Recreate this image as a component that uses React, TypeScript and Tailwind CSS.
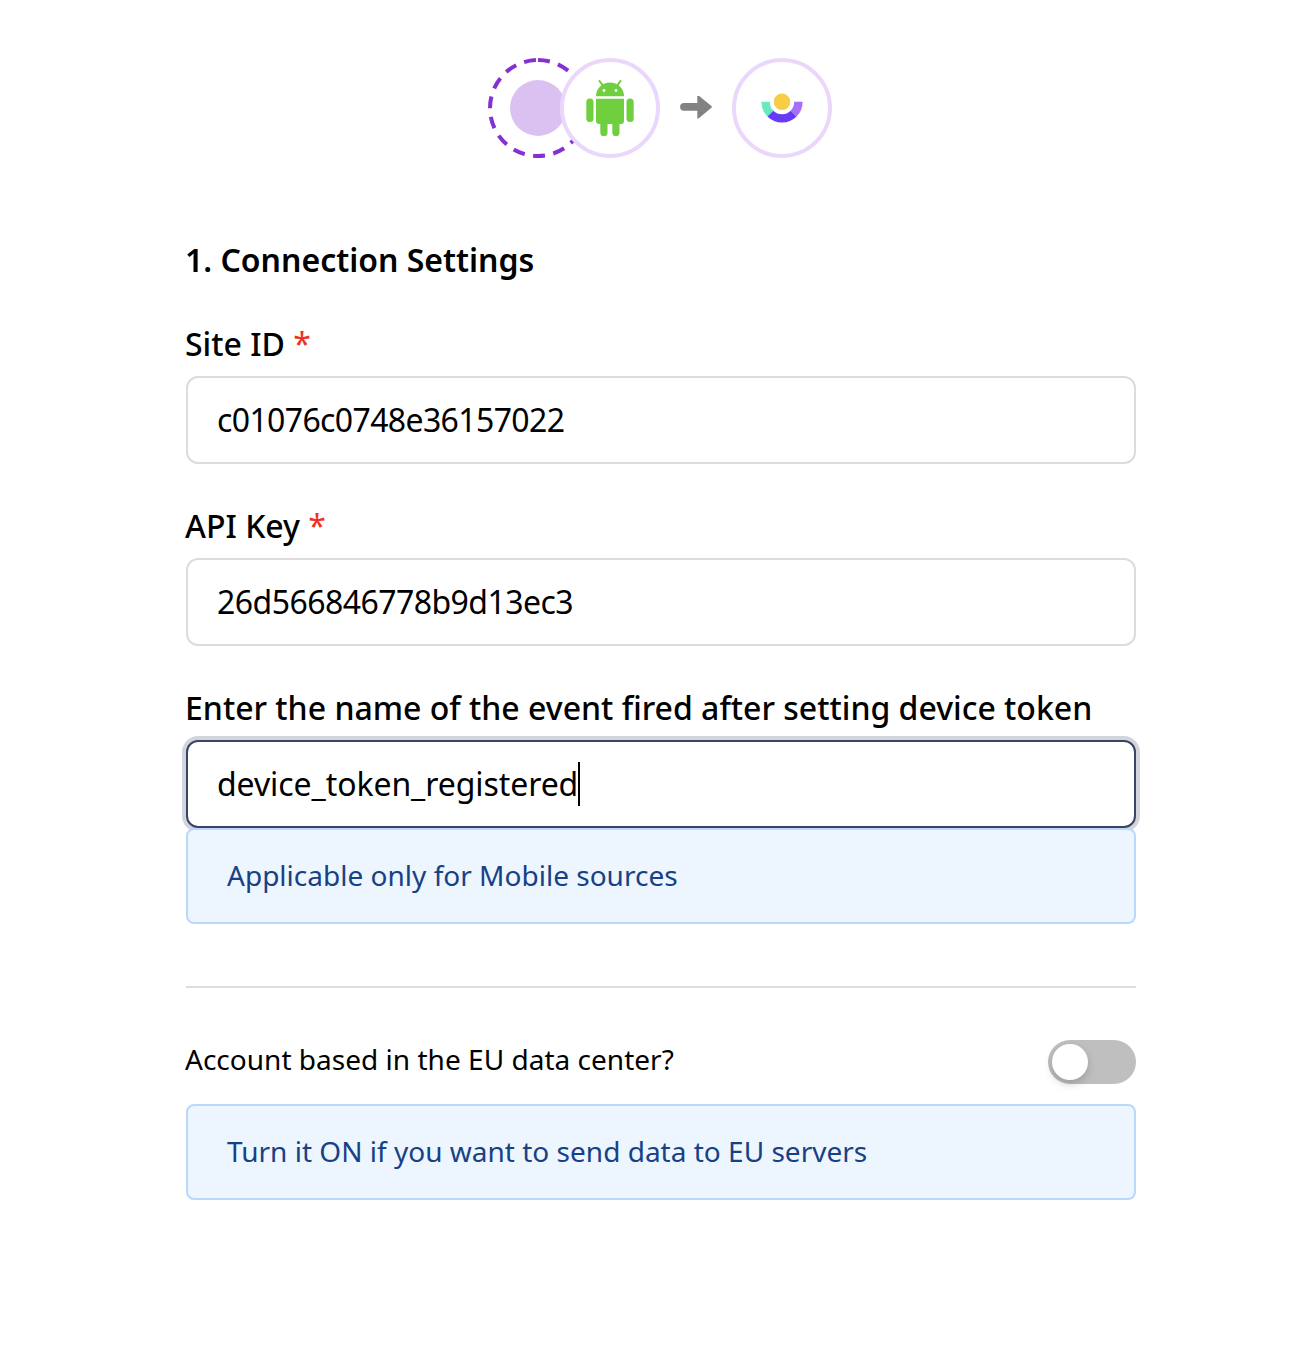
import type { ReactNode } from "react";

function AndroidIcon() {
  return (
    <svg width="48" height="56" viewBox="586 80 48 56" fill="#6fcf3f">
      <path d="M596 96.3a14 13.8 0 0 1 28 0z" />
      <path d="M599.5 81l3 4.2M620.5 81l-3 4.2" stroke="#6fcf3f" strokeWidth="2" strokeLinecap="round" />
      <circle cx="604" cy="90.5" r="1.4" fill="#fff" />
      <circle cx="616" cy="90.5" r="1.4" fill="#fff" />
      <path d="M596 98.8h28v22.2a3 3 0 0 1-3 3h-22a3 3 0 0 1-3-3z" />
      <rect x="586.3" y="98.5" width="7.2" height="23.6" rx="3.6" />
      <rect x="626.5" y="98.5" width="7.2" height="23.6" rx="3.6" />
      <rect x="600.3" y="116" width="7.2" height="20" rx="3.6" />
      <rect x="612.3" y="116" width="7.2" height="20" rx="3.6" />
    </svg>
  );
}

function CustomerLogo() {
  return (
    <svg width="56" height="56" viewBox="-28 -22 56 56" fill="none">
      <path d="M-16.4 -0.2A16.4 16.4 0 0 0 -11.6 11.6" stroke="#6ae8c0" strokeWidth="8.4" />
      <path d="M16.4 -0.2A16.4 16.4 0 0 1 11.6 11.6" stroke="#a66ff5" strokeWidth="8.4" />
      <path d="M-11.6 11.6A16.4 16.4 0 0 0 11.6 11.6" stroke="#673af6" strokeWidth="8.4" />
      <circle cx="0" cy="-0.2" r="8.3" fill="#f8cd46" />
    </svg>
  );
}

function Flow() {
  return (
    <div className="flex h-[100px] items-center pl-[488px]">
      <svg width="100" height="100" viewBox="0 0 100 100" fill="none">
        <circle cx="50" cy="50" r="48" stroke="#8530d3" strokeWidth="4" strokeDasharray="12 8.5" transform="rotate(-90 50 50)" />
        <circle cx="50" cy="50" r="28" fill="#dbc1f1" />
      </svg>
      <div className="relative -ml-7 flex size-[100px] items-center justify-center rounded-full border-4 border-[#ead7fb] bg-white">
        <AndroidIcon />
      </div>
      <svg className="mx-5" width="32" height="24" viewBox="0 0.3 32 24" fill="#828282">
        <path d="M4 7.2H17.3V0.2Q17.6 -0.8 18.8 0L31.4 10.4Q32.3 11.2 31.4 12L18.8 22.5Q17.6 23.2 17.3 22.2V15H4A3.9 3.9 0 0 1 4 7.2z" />
      </svg>
      <div className="flex size-[100px] items-center justify-center rounded-full border-4 border-[#ead7fb]">
        <CustomerLogo />
      </div>
    </div>
  );
}

function Label({ children, required }: { children: ReactNode; required?: boolean }) {
  return (
    <div className="-ml-px h-[44px] text-[32px] leading-[44px] font-medium whitespace-nowrap">
      {children}
      {required && <span className="font-normal text-[#ee3124]"> *</span>}
    </div>
  );
}

function Field({ value, focused, tracking }: { value: string; focused?: boolean; tracking: string }) {
  return (
    <div
      className={
        "mt-[10px] flex h-[88px] items-center rounded-xl border-2 bg-white pl-[29px] text-[32px] leading-[44px] " +
        (focused ? "border-[#3a4564] shadow-[0_0_0_4px_#d2d5dc]" : "border-[#dcdcdc]")
      }
    >
      <span className={tracking}>{value}</span>
      {focused && <span className="h-[44px] w-[2px] bg-black" />}
    </div>
  );
}

function Note({ children }: { children: ReactNode }) {
  return (
    <div className="relative flex h-[96px] items-center rounded-lg border-2 border-[#bbd7fb] bg-[#edf5ff] pb-[2px] pl-[39px] text-[28px] tracking-[0.01px] text-[#174185]">
      {children}
    </div>
  );
}

export default function App() {
  return (
    <div className="h-[1348px] w-[1300px] bg-white pt-[58px] font-['Noto_Sans',sans-serif] text-black">
      <Flow />
      <main className="ml-[186px] w-[950px] pt-[80px]">
        <h1 className="-ml-px h-[44px] text-[32px] leading-[44px] font-semibold">1. Connection Settings</h1>
        <section className="mt-10">
          <Label required>Site ID</Label>
          <Field value="c01076c0748e36157022" tracking="tracking-[-0.63px]" />
        </section>
        <section className="mt-10">
          <Label required>API Key</Label>
          <Field value="26d566846778b9d13ec3" tracking="tracking-[-0.55px]" />
        </section>
        <section className="mt-10">
          <Label>Enter the name of the event fired after setting device token</Label>
          <Field value="device_token_registered" focused tracking="tracking-[-0.08px]" />
          <Note>Applicable only for Mobile sources</Note>
        </section>
        <hr className="mt-[62px] border-t-2 border-[#dedede]" />
        <div className="mt-[52px] flex h-[44px] items-center justify-between">
          <span className="-mt-[6px] -ml-px text-[28px] tracking-[0.02px]">Account based in the EU data center?</span>
          <div className="h-[44px] w-[88px] rounded-full bg-[#bfbfbf] p-1">
            <div className="size-9 rounded-full bg-white shadow-[0_4px_8px_rgba(0,35,11,0.2)]" />
          </div>
        </div>
        <div className="mt-5">
          <Note>Turn it ON if you want to send data to EU servers</Note>
        </div>
      </main>
    </div>
  );
}
